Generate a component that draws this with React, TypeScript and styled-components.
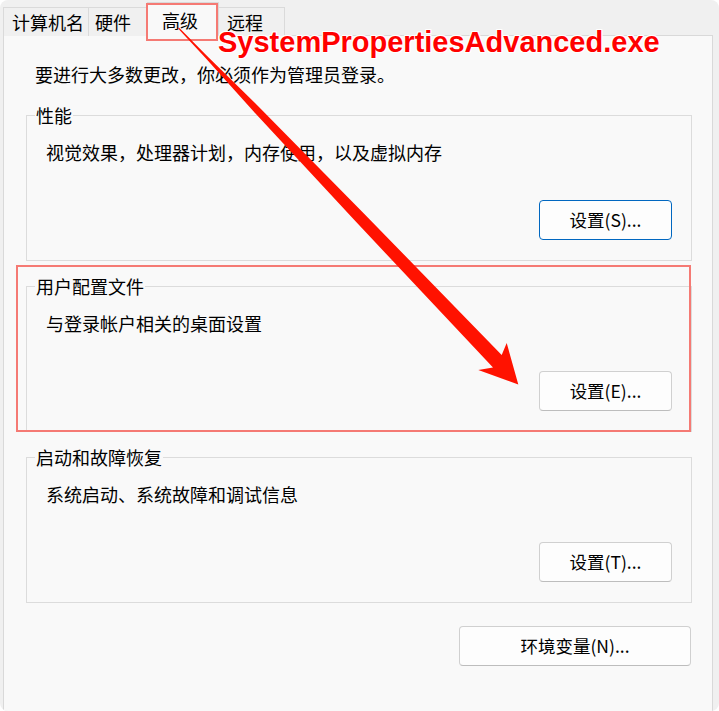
import styled, { createGlobalStyle, css } from "styled-components";

const GlobalStyle = createGlobalStyle`
  html, body {
    margin: 0;
    padding: 0;
    background: #ffffff;
  }
  body {
    font-family: "Noto Sans CJK SC", "Noto Sans", sans-serif;
  }
`;

const Window = styled.div`
  position: relative;
  width: 719px;
  height: 711px;
  box-sizing: border-box;
  padding: 2px 6px 0 3px;
  background: #f0f0f0;
  border-radius: 8px;
  overflow: hidden;
  display: flex;
  flex-direction: column;
  font-size: 18px;
  line-height: 22px;
  color: #000;
`;

const TabStrip = styled.div`
  position: relative;
  z-index: 1;
  display: flex;
  align-items: flex-end;
  height: 34px;
  margin-bottom: -1px;
`;

const Tab = styled.div<{ $w: number; $pad: number; $active?: boolean }>`
  box-sizing: border-box;
  width: ${(p) => p.$w}px;
  height: 29px;
  margin-right: -1px;
  padding: 3px 0 0 ${(p) => p.$pad}px;
  border: 1px solid #dadada;
  border-bottom: none;
  background: #f0f0f0;
  white-space: nowrap;

  ${(p) =>
    p.$active &&
    css`
      position: relative;
      z-index: 2;
      height: 34px;
      padding-top: 6px;
      background: #f9f9f9;
    `}
`;

const Panel = styled.div`
  flex: 1;
  display: flex;
  flex-direction: column;
  padding: 27px 20px 0 22px;
  background: #f9f9f9;
  border: 1px solid #d9d9d9;
  border-bottom: none;
`;

const AdminNote = styled.div`
  margin-left: 9px;
`;

const GroupBox = styled.fieldset<{ $gap: number }>`
  display: flex;
  flex-direction: column;
  min-width: 0;
  margin: ${(p) => p.$gap}px 0 0;
  padding: 15px 19px 20px 8px;
  border: 1px solid #dcdcdc;
`;

const Legend = styled.legend`
  padding: 0 1px;
  line-height: 22px;
`;

const Description = styled.div`
  margin-left: 11px;
`;

const ButtonRow = styled.div`
  display: flex;
  justify-content: flex-end;
  margin-top: 37px;
`;

const Button = styled.button<{ $focused?: boolean; $w?: number }>`
  box-sizing: border-box;
  width: ${(p) => p.$w ?? 133}px;
  height: 40px;
  padding: 0;
  font: inherit;
  font-size: 17.5px;
  color: #000;
  background: #fdfdfd;
  border: 1px solid #d0d0d0;
  border-bottom-color: #bdbdbd;
  border-radius: 4px;

  ${(p) =>
    p.$focused &&
    css`
      border-color: #0067c0;
    `}
`;

const EnvButton = styled(Button)`
  align-self: flex-end;
  margin: 23px 1px 0 0;
`;

// annotations drawn over the screenshot
const Frame = styled.div<{ $x: number; $y: number; $w: number; $h: number }>`
  position: absolute;
  left: ${(p) => p.$x}px;
  top: ${(p) => p.$y}px;
  width: ${(p) => p.$w}px;
  height: ${(p) => p.$h}px;
  box-sizing: border-box;
  border: 2px solid #f57a74;
  z-index: 5;
  pointer-events: none;
`;

const ExeLabel = styled.div`
  position: absolute;
  left: 218px;
  top: 28px;
  z-index: 6;
  font-family: "Liberation Sans", Arial, sans-serif;
  font-weight: bold;
  font-size: 29px;
  line-height: 29px;
  color: #ff0000;
  text-shadow: 1px 0 0 #fff, -1px 0 0 #fff, 0 1px 0 #fff, 0 -1px 0 #fff,
    1px 1px 0 #fff, -1px -1px 0 #fff, 1px -1px 0 #fff, -1px 1px 0 #fff;
  white-space: nowrap;
`;

const ArrowLayer = styled.svg`
  position: absolute;
  left: 0;
  top: 0;
  z-index: 6;
  pointer-events: none;
`;

const tabs = [
  { label: "计算机名", w: 86, pad: 8 },
  { label: "硬件", w: 60, pad: 6 },
  { label: "高级", w: 72, pad: 14, active: true },
  { label: "远程", w: 67, pad: 8 },
];

const groups = [
  {
    title: "性能",
    text: "视觉效果，处理器计划，内存使用，以及虚拟内存",
    button: "设置(S)...",
    focused: true,
    gap: 19,
  },
  {
    title: "用户配置文件",
    text: "与登录帐户相关的桌面设置",
    button: "设置(E)...",
    gap: 14,
  },
  {
    title: "启动和故障恢复",
    text: "系统启动、系统故障和调试信息",
    button: "设置(T)...",
    gap: 14,
  },
];

export default function App() {
  return (
    <>
      <GlobalStyle />
      <Window>
        <TabStrip>
          {tabs.map((t) => (
            <Tab key={t.label} $w={t.w} $pad={t.pad} $active={t.active}>
              {t.label}
            </Tab>
          ))}
        </TabStrip>

        <Panel>
          <AdminNote>要进行大多数更改，你必须作为管理员登录。</AdminNote>

          {groups.map((g) => (
            <GroupBox key={g.title} $gap={g.gap}>
              <Legend>{g.title}</Legend>
              <Description>{g.text}</Description>
              <ButtonRow>
                <Button $focused={g.focused}>{g.button}</Button>
              </ButtonRow>
            </GroupBox>
          ))}

          <EnvButton $w={232}>环境变量(N)...</EnvButton>
        </Panel>

        <Frame $x={146} $y={3} $w={72} $h={38} />
        <Frame $x={16} $y={265} $w={675} $h={167} />
        <ExeLabel>SystemPropertiesAdvanced.exe</ExeLabel>

        <ArrowLayer width="719" height="711" viewBox="0 0 719 711">
          <polygon
            fill="#ff1200"
            points="178.9,27.6 207.1,56 259.2,107.2 362.4,211.9 501.7,355 506.7,343 518.3,384.5 478.3,370 493,367.5 354.1,219.8 254.1,112.1 205.3,57.8 178.1,28.4"
          />
        </ArrowLayer>
      </Window>
    </>
  );
}
